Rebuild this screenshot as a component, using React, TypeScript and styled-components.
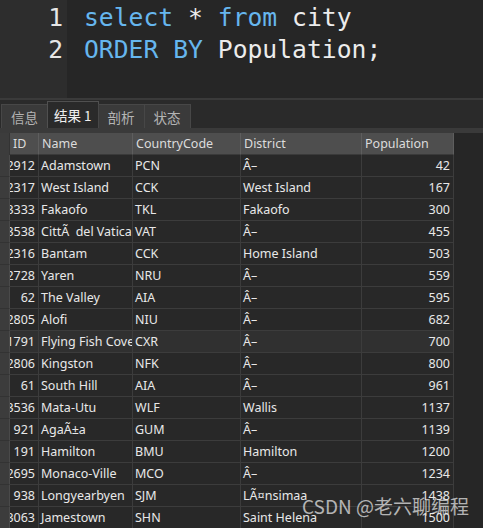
import React from "react";
import styled, { createGlobalStyle } from "styled-components";

const Global = createGlobalStyle`
  html, body { margin: 0; padding: 0; background: #262626; }
  body { width: 483px; height: 528px; overflow: hidden; }
`;

const Page = styled.div`
  width: 483px;
  height: 528px;
  display: flex;
  flex-direction: column;
  background: #262626;
  position: relative;
  overflow: hidden;
`;

const Editor = styled.div`
  height: 98px;
  display: flex;
  flex-shrink: 0;
  font-family: "DejaVu Sans Mono", "Liberation Mono", monospace;
  font-size: 24.7px;
  line-height: 32px;
`;

const Gutter = styled.div`
  width: 67px;
  background: #2d2d2d;
  color: #e6e6e6;
  text-align: right;
  padding-top: 2px;
  box-sizing: border-box;
  padding-right: 4px;
`;

const Code = styled.div`
  flex: 1;
  background: #262626;
  padding-left: 17px;
  padding-top: 2px;
  color: #ececec;
  white-space: pre;
`;

const Kw = styled.span`
  color: #66b6ee;
`;

const TabBar = styled.div`
  height: 30px;
  flex-shrink: 0;
  background: #2a2a2a;
  border-top: 2px solid #3a3a3a;
  display: flex;
  align-items: flex-end;
  padding-left: 2px;
  box-sizing: border-box;
`;

const Tab = styled.div<{ $active?: boolean }>`
  height: ${(p) => (p.$active ? 27 : 24)}px;
  box-sizing: border-box;
  padding: 0 ${(p) => (p.$active ? 6 : 9)}px;
  display: flex;
  align-items: center;
  white-space: pre;
  font-family: "Noto Sans CJK SC", "Noto Sans", sans-serif;
  font-size: 13.5px;
  color: ${(p) => (p.$active ? "#f0f0f0" : "#b4b4b4")};
  background: ${(p) => (p.$active ? "#2a2a2a" : "#3a3a3a")};
  border: 1px solid ${(p) => (p.$active ? "#505050" : "#474747")};
  border-bottom: none;
  margin-left: -1px;
`;

const Gap = styled.div`
  height: 5px;
  flex-shrink: 0;
  background: #3a3a3a;
`;

const Grid = styled.div`
  display: grid;
  grid-template-columns: 10px 29px 94px 108px 121px 92px;
  grid-auto-rows: 22px;
  width: 454px;
  font-family: "Noto Sans", "Noto Sans CJK SC", sans-serif;
  font-size: 12.5px;
`;

const Head = styled.div`
  background: #4e4e4e;
  color: #dcdcdc;
  border-right: 1px solid #5e5e5e;
  display: flex;
  align-items: center;
  padding-left: 3px;
  white-space: nowrap;
  overflow: hidden;
  line-height: 22px;
  height: 21px;
  border-bottom: 1px solid #3a3a3a;
`;

const Corner = styled.div`
  background: #3c3c3c;
  border-right: 1px solid #333;
`;

const RowHead = styled.div`
  background: #3c3c3c;
  border-bottom: 1px solid #333;
  border-right: 1px solid #4a4a4a;
`;

const Cell = styled.div<{ $right?: boolean; $hl?: boolean }>`
  background: ${(p) => (p.$hl ? "#303030" : "#282828")};
  color: #e8e8e8;
  border-right: 1px solid #3c3c3c;
  border-bottom: 1px solid #3c3c3c;
  display: flex;
  align-items: center;
  justify-content: ${(p) => (p.$right ? "flex-end" : "flex-start")};
  padding: 0 3px 0 2px;
  white-space: pre;
  overflow: hidden;
  box-sizing: border-box;
`;

const Watermark = styled.div`
  position: absolute;
  right: 14px;
  bottom: 9px;
  font-family: "Noto Sans CJK SC", "Noto Sans", sans-serif;
  font-size: 19px;
  color: rgba(235, 235, 235, 0.72);
  white-space: nowrap;
`;

const rows: [string, string, string, string, string][] = [
  ["2912", "Adamstown", "PCN", "Â–", "42"],
  ["2317", "West Island", "CCK", "West Island", "167"],
  ["3333", "Fakaofo", "TKL", "Fakaofo", "300"],
  ["3538", "CittÃ\u00a0 del Vatica", "VAT", "Â–", "455"],
  ["2316", "Bantam", "CCK", "Home Island", "503"],
  ["2728", "Yaren", "NRU", "Â–", "559"],
  ["62", "The Valley", "AIA", "Â–", "595"],
  ["2805", "Alofi", "NIU", "Â–", "682"],
  ["1791", "Flying Fish Cove", "CXR", "Â–", "700"],
  ["2806", "Kingston", "NFK", "Â–", "800"],
  ["61", "South Hill", "AIA", "Â–", "961"],
  ["3536", "Mata-Utu", "WLF", "Wallis", "1137"],
  ["921", "AgaÃ±a", "GUM", "Â–", "1139"],
  ["191", "Hamilton", "BMU", "Hamilton", "1200"],
  ["2695", "Monaco-Ville", "MCO", "Â–", "1234"],
  ["938", "Longyearbyen", "SJM", "LÃ¤nsimaa", "1438"],
  ["3063", "Jamestown", "SHN", "Saint Helena", "1500"],
];

export default function App() {
  return (
    <Page>
      <Global />
      <Editor>
        <Gutter>
          <div>1</div>
          <div>2</div>
        </Gutter>
        <Code>
          <div>
            <Kw>select</Kw> * <Kw>from</Kw> city
          </div>
          <div>
            <Kw>ORDER BY</Kw> Population;
          </div>
        </Code>
      </Editor>
      <TabBar>
        <Tab>信息</Tab>
        <Tab $active>结果 1</Tab>
        <Tab>剖析</Tab>
        <Tab>状态</Tab>
      </TabBar>
      <Gap />
      <Grid>
        <Corner />
        <Head>ID</Head>
        <Head>Name</Head>
        <Head>CountryCode</Head>
        <Head>District</Head>
        <Head>Population</Head>
        {rows.map((r, i) => {
          const hl = i === 8;
          return (
            <React.Fragment key={i}>
              <RowHead />
              <Cell $right $hl={hl}>{r[0]}</Cell>
              <Cell $hl={hl}>{r[1]}</Cell>
              <Cell $hl={hl}>{r[2]}</Cell>
              <Cell $hl={hl}>{r[3]}</Cell>
              <Cell $right $hl={hl}>{r[4]}</Cell>
            </React.Fragment>
          );
        })}
      </Grid>
      <Watermark>CSDN @老六聊编程</Watermark>
    </Page>
  );
}
